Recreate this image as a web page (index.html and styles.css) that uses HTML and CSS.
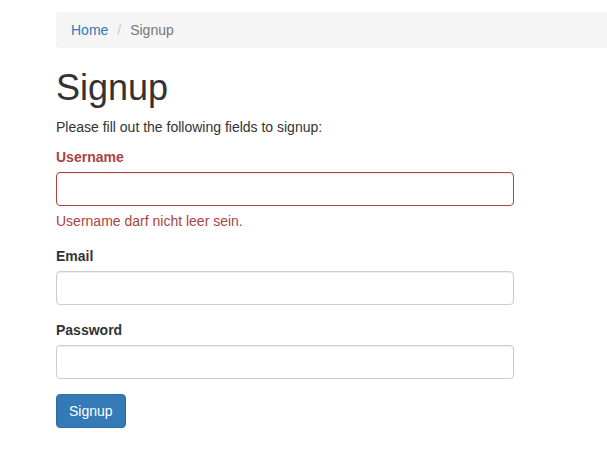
FILE: index.html
```html
<!DOCTYPE html>
<html lang="de">
<head>
<meta charset="utf-8">
<title>Signup</title>
<link rel="stylesheet" href="styles.css">
</head>
<body>
<div class="container">
  <ul class="breadcrumb">
    <li><a href="#">Home</a></li>
    <li class="active">Signup</li>
  </ul>
  <div class="site-signup">
    <h1>Signup</h1>
    <p>Please fill out the following fields to signup:</p>
    <div class="row">
      <div class="col">
        <form>
          <div class="form-group has-error">
            <label class="control-label" for="username">Username</label>
            <input type="text" id="username" class="form-control">
            <div class="help-block">Username darf nicht leer sein.</div>
          </div>
          <div class="form-group">
            <label class="control-label" for="email">Email</label>
            <input type="text" id="email" class="form-control">
          </div>
          <div class="form-group">
            <label class="control-label" for="password">Password</label>
            <input type="password" id="password" class="form-control">
          </div>
          <div class="form-group">
            <button type="button" class="btn btn-primary">Signup</button>
          </div>
        </form>
      </div>
    </div>
  </div>
</div>
</body>
</html>
```
FILE: styles.css
```css
* { box-sizing: border-box; }
html, body { margin: 0; padding: 0; overflow: hidden; }
body {
  font-family: "Liberation Sans", Arial, sans-serif;
  font-size: 14px;
  line-height: 1.42857143;
  color: #333;
  background: #fff;
}
.container {
  width: 1170px;
  margin-left: 41px;
  padding: 12px 15px 20px;
}
.breadcrumb {
  display: flex;
  gap: 4px;
  list-style: none;
  margin: 0 0 20px;
  padding: 8px 15px;
  background: #f5f5f5;
  border-radius: 4px;
}
.breadcrumb li + li::before {
  content: "/\00a0";
  padding: 0 5px;
  color: #ccc;
}
.breadcrumb a { color: #337ab7; text-decoration: none; }
.breadcrumb .active { color: #777; }
h1 {
  font-family: inherit;
  font-weight: 500;
  font-size: 36px;
  line-height: 39px;
  margin: 20px 0 10px;
  color: inherit;
}
p { margin: 0 0 10px; }
.row { display: flex; margin: 0 -15px; }
.col { width: 41.66666667%; padding: 0 15px; }
form { margin: 0; }
.form-group { margin-bottom: 15px; }
label {
  display: inline-block;
  max-width: 100%;
  margin-bottom: 5px;
  font-weight: bold;
}
.form-control {
  display: block;
  width: 100%;
  height: 34px;
  padding: 6px 12px;
  font: inherit;
  font-size: 14px;
  line-height: 1.42857143;
  color: #555;
  background: #fff;
  border: 1px solid #ccc;
  border-radius: 4px;
  box-shadow: inset 0 1px 1px rgba(0,0,0,.075);
  margin: 0;
}
.has-error .control-label, .has-error .help-block { color: #a94442; }
.has-error .form-control { border-color: #a94442; }
.help-block {
  display: block;
  margin-top: 5px;
  margin-bottom: 10px;
}
.btn {
  display: inline-block;
  padding: 6px 12px;
  margin: 0;
  font: inherit;
  font-size: 14px;
  line-height: 1.42857143;
  text-align: center;
  border: 1px solid transparent;
  border-radius: 4px;
  cursor: pointer;
}
.btn-primary {
  color: #fff;
  background: #337ab7;
  border-color: #2e6da4;
}
```
